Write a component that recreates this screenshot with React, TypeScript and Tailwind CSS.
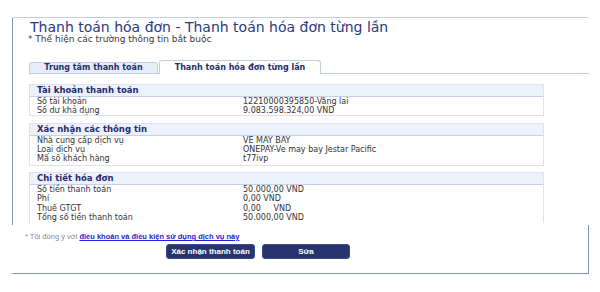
import React from "react";

const sections = [
  {
    title: "Tài khoản thanh toán",
    rows: [
      ["Số tài khoản", "12210000395850-Vãng lai"],
      ["Số dư khả dụng", "9.083.598.324,00 VND"],
    ],
    rowH: "h-[9px]",
    mt: "mt-[10px]",
    pb: "pb-0",
    open: false,
  },
  {
    title: "Xác nhận các thông tin",
    rows: [
      ["Nhà cung cấp dịch vụ", "VE MAY BAY"],
      ["Loại dịch vụ", "ONEPAY-Ve may bay Jestar Pacific"],
      ["Mã số khách hàng", "t77ivp"],
    ],
    rowH: "h-[9px]",
    mt: "mt-[7px]",
    pb: "pb-[2px]",
    open: false,
  },
  {
    title: "Chi tiết hóa đơn",
    rows: [
      ["Số tiền thanh toán", "50.000,00 VND"],
      ["Phí", "0,00 VND"],
      ["Thuế GTGT", "0,00\u00a0\u00a0\u00a0\u00a0 VND"],
      ["Tổng số tiền thanh toán", "50.000,00 VND"],
    ],
    rowH: "h-[9.5px]",
    mt: "mt-[6px]",
    pb: "pb-0",
    open: true,
  },
];

export default function App() {
  return (
    <div
      className="w-[600px] h-[292px] bg-white pt-[17px] pl-[12px] overflow-hidden"
      style={{ fontFamily: '"DejaVu Sans", Verdana, sans-serif' }}
    >
      <div className="w-[577px] border-t border-[#c3cce0] rounded-tl-[3px] rounded-tr-[3px]">
        {/* upper part */}
        <div className="h-[207px] border-l border-[#8596be] overflow-hidden">
          <div className="pt-[2px] pl-[17px] h-[17px] text-[14px] leading-[14px] text-[#2b3a7e] whitespace-nowrap">
            Thanh toán hóa đơn - Thanh toán hóa đơn từng lần
          </div>
          <div className="pl-[15px] h-[9px] text-[9px] leading-[9px] text-[#3a3a3a] whitespace-nowrap">
            * Thể hiện các trường thông tin bắt buộc
          </div>
          {/* tabs */}
          <div className="mt-[16px] ml-[16px] h-[14px] flex items-end border-b border-[#c3cde2]">
            <div className="w-[129px] h-[12px] -mb-px flex items-center justify-center bg-[#e7edf8] border border-[#c3cde2] rounded-tl-[3px] rounded-tr-[3px] text-[8px] leading-none font-bold text-[#23306e] whitespace-nowrap">
              Trung tâm thanh toán
            </div>
            <div className="ml-px w-[162px] h-[14px] -mb-px flex items-center justify-center bg-white border border-b-0 border-[#c3cde2] rounded-tl-[3px] rounded-tr-[3px] text-[8px] leading-none font-bold text-[#23306e] whitespace-nowrap">
              Thanh toán hóa đơn từng lần
            </div>
          </div>
          {/* sections */}
          {sections.map((s) => (
            <div
              key={s.title}
              className={`${s.mt} ml-[16px] w-[515px] border-t border-l border-r border-[#dbe2f1] ${s.open ? "" : "border-b"} ${s.pb}`}
            >
              <div className="h-[12px] bg-[#edf1fb] border-b border-[#c6d0e9] flex items-center pl-[7px] text-[8.5px] leading-none font-bold text-[#1f2b6c] whitespace-nowrap">
                {s.title}
              </div>
              {s.rows.map(([k, v]) => (
                <div
                  key={k}
                  className={`${s.rowH} flex items-center text-[8px] leading-none text-[#333333] whitespace-nowrap`}
                >
                  <div className="w-[213px] pl-[7px]">{k}</div>
                  <div>{v}</div>
                </div>
              ))}
            </div>
          ))}
        </div>
        {/* lower part */}
        <div className="h-[49px] border-r border-b border-[#8192bd] pt-[8px]">
          <div
            className="pl-[13px] h-[8px] text-[7.5px] leading-[8px] whitespace-nowrap"
            style={{ fontFamily: '"Liberation Sans", Arial, sans-serif' }}
          >
            <span className="text-[#8a8a8a]">* Tôi đồng ý với </span>
            <span className="text-[#2424d8] font-bold underline">điều khoản và điều kiện sử dụng dịch vụ này</span>
          </div>
          <div
            className="mt-[3px] pl-[154px] flex gap-[7px]"
            style={{ fontFamily: '"Liberation Sans", Arial, sans-serif' }}
          >
            <div className="w-[89px] h-[15px] rounded-[3px] bg-[#27346e] border border-[#3d4b8a] flex items-center justify-center text-white text-[8px] font-bold leading-none whitespace-nowrap">
              Xác nhận thanh toán
            </div>
            <div className="w-[88px] h-[15px] rounded-[3px] bg-[#27346e] border border-[#3d4b8a] flex items-center justify-center text-white text-[8px] font-bold leading-none whitespace-nowrap">
              Sửa
            </div>
          </div>
        </div>
      </div>
    </div>
  );
}
